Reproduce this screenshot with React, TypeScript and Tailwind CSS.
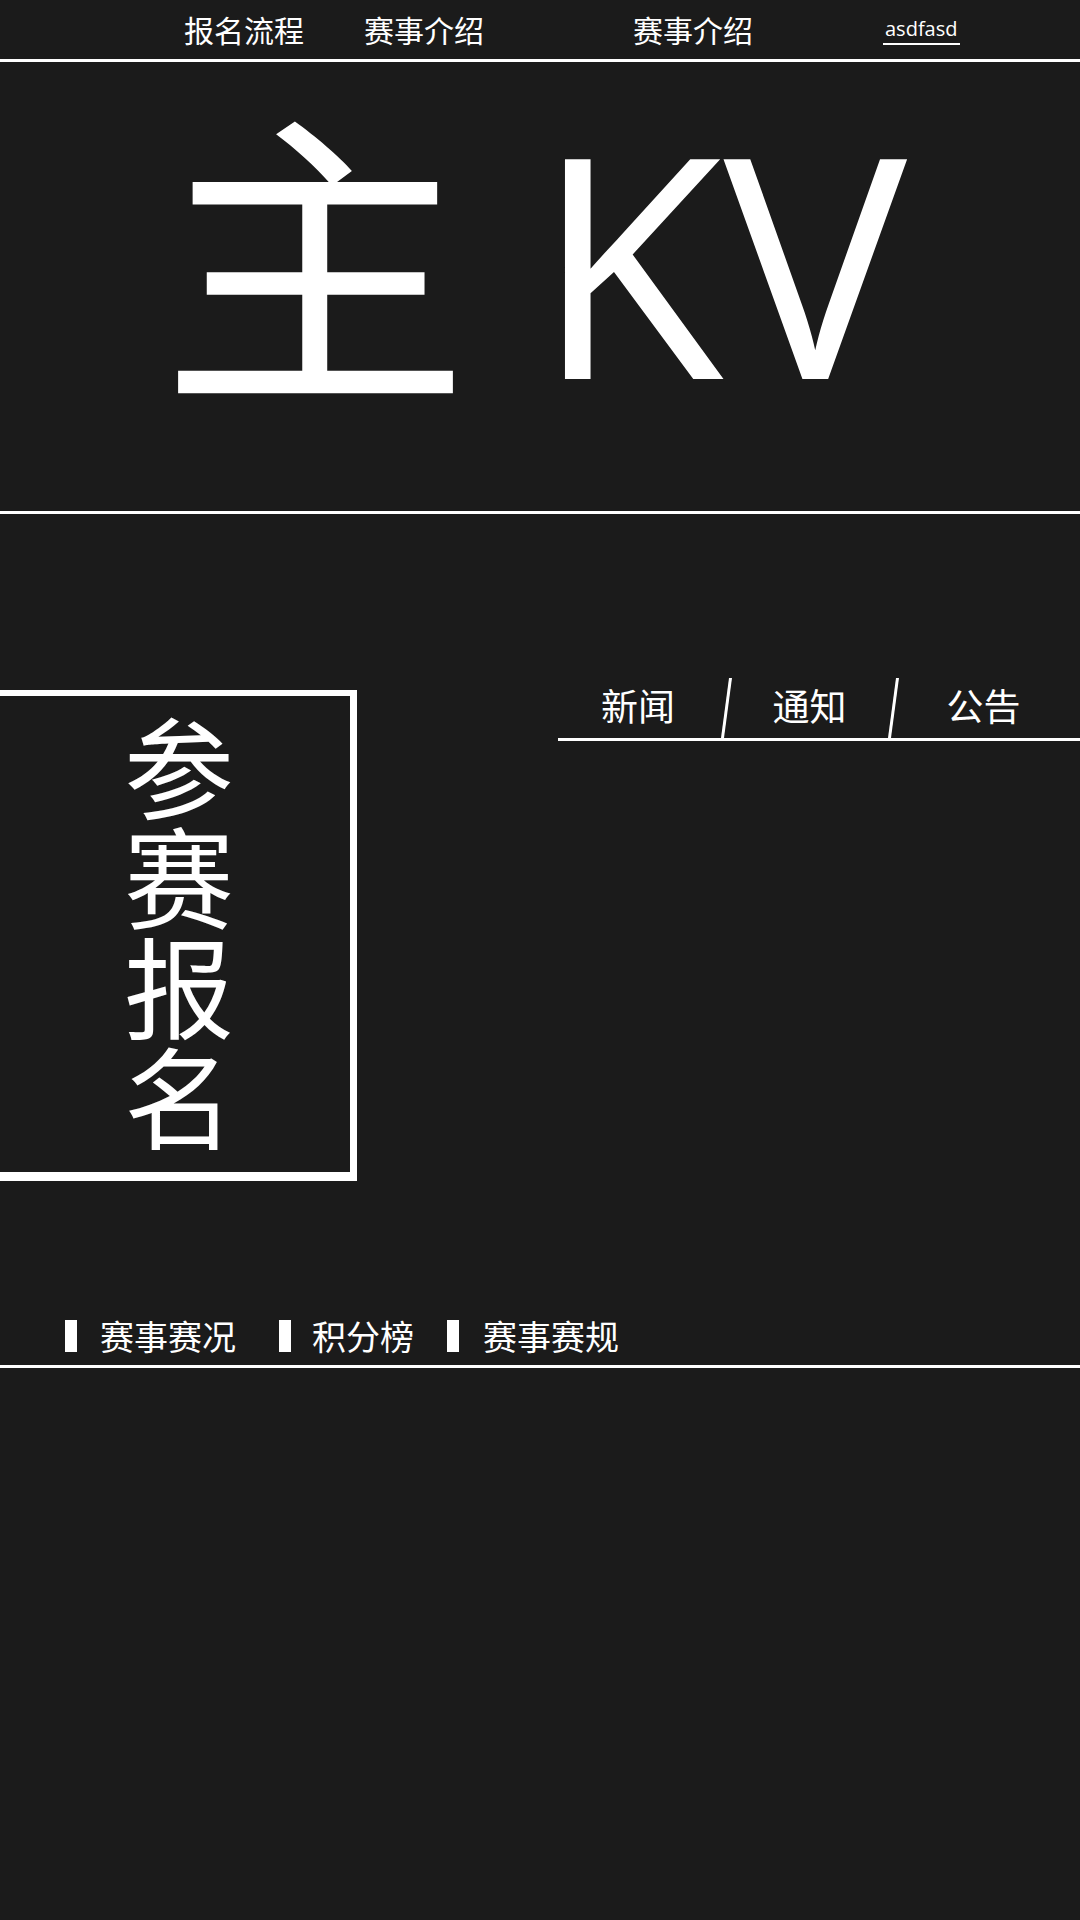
export default function App() {
  return (
    <div className="min-h-[1920px] w-full bg-[#1b1b1b] text-white font-['Noto_Sans_CJK_SC',sans-serif]">
      {/* top nav */}
      <header className="flex h-[62px] items-center border-b-[3px] border-white pl-[184px] text-[30px]">
        <a className="whitespace-nowrap">报名流程</a>
        <a className="ml-[60px] whitespace-nowrap">赛事介绍</a>
        <a className="ml-[149px] whitespace-nowrap">赛事介绍</a>
        <a className="ml-[130px] border-b-2 border-white px-[2px] pb-[1px] font-['Open_Sans',sans-serif] text-[20px] leading-[27px]">
          asdfasd
        </a>
      </header>

      {/* key visual */}
      <section className="h-[452px] whitespace-nowrap border-b-[3px] border-white pt-[44px] pr-[12px] text-center font-['Open_Sans','Noto_Sans_CJK_SC',sans-serif] text-[308px] leading-none">
        主<span className="inline-block w-[66px]" />KV
      </section>

      <section className="flex items-start pt-[164px]">
        <div className="mt-[12px] flex h-[491px] w-[357px] shrink-0 items-center justify-center border-t-[6px] border-r-[7px] border-b-[9px] border-white pl-[8px]">
          <div className="text-[110px] leading-none [writing-mode:vertical-rl]">参赛报名</div>
        </div>

        <div className="ml-auto flex w-[522px] border-b-[3px] border-white text-[37px]">
          <div className="flex h-[60px] w-[160px] justify-center">新闻</div>
          <div className="flex h-[60px] w-[16px] justify-center">
            <div className="h-full w-[3px] skew-x-[-7.6deg] bg-white" />
          </div>
          <div className="flex h-[60px] w-[151px] justify-center">通知</div>
          <div className="flex h-[60px] w-[16px] justify-center">
            <div className="h-full w-[3px] skew-x-[-7.6deg] bg-white" />
          </div>
          <div className="flex h-[60px] w-[165px] justify-center">公告</div>
        </div>
      </section>

      {/* match tabs */}
      <div className="mt-[129px] flex items-center border-b-[3px] border-white pb-[4px] pl-[65px] text-[34px]">
        <span className="h-[32px] w-[12px] bg-white" />
        <span className="ml-[23px]">赛事赛况</span>
        <span className="ml-[43px] h-[32px] w-[12px] bg-white" />
        <span className="ml-[21px]">积分榜</span>
        <span className="ml-[33px] h-[32px] w-[12px] bg-white" />
        <span className="ml-[24px]">赛事赛规</span>
      </div>
    </div>
  );
}
